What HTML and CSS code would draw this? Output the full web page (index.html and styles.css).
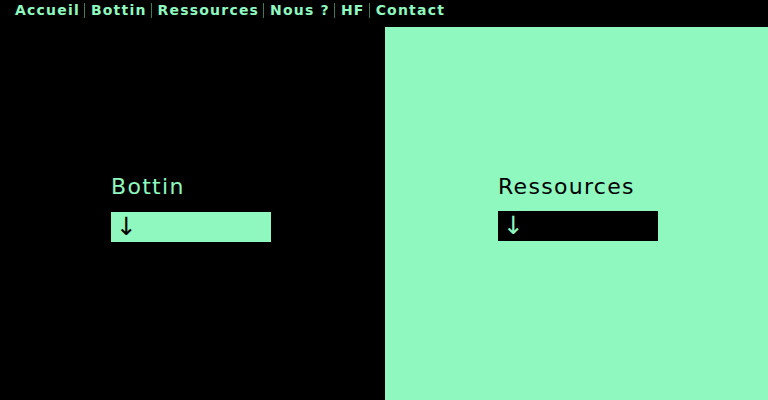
FILE: index.html
```html
<!DOCTYPE html>
<html lang="fr">
<head>
<meta charset="utf-8">
<link rel="stylesheet" href="styles.css">
</head>
<body>
<nav class="nav">
  <a href="#">Accueil</a><span class="sep"></span><a href="#">Bottin</a><span class="sep"></span><a href="#">Ressources</a><span class="sep"></span><a href="#">Nous ?</a><span class="sep"></span><a href="#">HF</a><span class="sep"></span><a href="#">Contact</a>
</nav>
<main class="split">
  <section class="panel dark">
    <div class="block">
      <h2 class="title">Bottin</h2>
      <div class="bar">↓</div>
    </div>
  </section>
  <section class="panel light">
    <div class="block">
      <h2 class="title">Ressources</h2>
      <div class="bar">↓</div>
    </div>
  </section>
</main>
</body>
</html>
```
FILE: styles.css
```css
* { box-sizing: border-box; }
html, body { margin: 0; height: 100%; }
body {
  background: #000;
  font-family: "DejaVu Sans", sans-serif;
  color: #8ef8bf;
  display: flex;
  flex-direction: column;
  overflow: hidden;
}
.nav {
  height: 27px;
  display: flex;
  align-items: center;
  padding: 0 0 7px 15px;
  font-weight: bold;
  font-size: 14px;
  letter-spacing: 1.2px;
}
.nav a {
  color: #8ef8bf;
  text-decoration: none;
}
.sep {
  width: 1px;
  height: 15px;
  background: #3f7a5a;
  margin: 0 6px 0 4px;
}
.split {
  flex: 1;
  display: grid;
  grid-template-columns: 385px 1fr;
}
.panel {
  display: flex;
  justify-content: center;
  align-items: center;
  padding-bottom: 12px;
}
.dark { background: #000; color: #8ef8bf; padding-right: 3px; }
.light { background: #8ef8bf; color: #000; padding-left: 3px; }
.block { width: 160px; }
.title {
  margin: 0 0 12px 0;
  font-family: "DejaVu Sans", sans-serif;
  font-weight: normal;
  font-size: 22px;
  line-height: 26px;
  letter-spacing: 1.3px;
  white-space: nowrap;
}
.bar {
  height: 30px;
  padding-left: 5px;
  font-size: 25px;
  line-height: 30px;
}
.dark .bar { background: #8ef8bf; color: #000; }
.light .bar { background: #000; color: #8ef8bf; margin-top: -1px; }
```
